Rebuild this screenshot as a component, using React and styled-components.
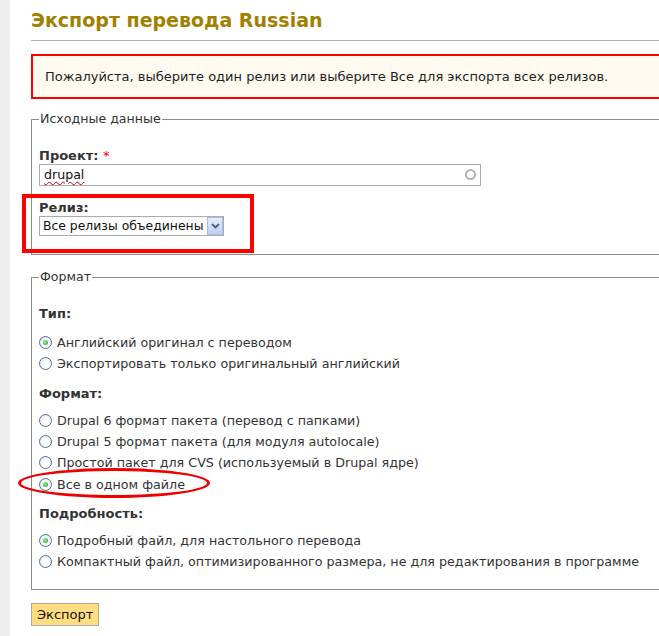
import React from "react";
import styled, { createGlobalStyle } from "styled-components";

const Global = createGlobalStyle`
  html, body { margin: 0; padding: 0; background: #fff; overflow: hidden; }
  body { font-family: "DejaVu Sans", Verdana, sans-serif; font-size: 12.7px; color: #333; }
  * { box-sizing: border-box; }
`;

const Page = styled.div`
  position: relative;
  display: flex;
  width: 659px;
  height: 636px;
  overflow: hidden;
`;

const Strip = styled.div`
  flex: 0 0 10px;
  background: #eeeeee;
`;

const Main = styled.div`
  flex: 0 0 720px;
  margin-left: 21px;
  padding-top: 8px;
`;

const Title = styled.h1`
  margin: 0;
  padding-bottom: 8px;
  font-size: 19px;
  line-height: 24px;
  font-weight: bold;
  color: #a08000;
  border-bottom: 1px solid #b4b4b4;
`;

const Message = styled.div`
  margin-top: 13px;
  height: 45px;
  border: 2px solid #ff0000;
  background: #fffaf0;
  padding: 0 12px;
  font-size: 13px;
  line-height: 41px;
  color: #1e1e1e;
`;

const Fieldset = styled.fieldset`
  margin: ${(p) => p.$mt}px 0 0;
  padding: 22px 7px ${(p) => p.$pb}px;
  border: 1px solid #8c8c8c;
  border-right: none;
`;

const Legend = styled.legend`
  padding: 0 1px;
  font-size: 12.6px;
  line-height: 14px;
  color: #333;
`;

const Label = styled.div`
  font-weight: bold;
  font-size: 13px;
  line-height: 16px;
  color: #333;
  margin-bottom: ${(p) => p.$mb || 0}px;
`;

const Required = styled.span`
  color: #e00;
  font-weight: normal;
`;

const TextBox = styled.div`
  position: relative;
  width: 442px;
  height: 22px;
  border: 1px solid #a5acb2;
  padding-left: 4px;
  font-size: 12.6px;
  line-height: 20px;
  color: #111;
`;

const Misspelled = styled.span`
  text-decoration: underline wavy #e00000;
  text-decoration-thickness: 1px;
  text-underline-offset: 2px;
`;

const Throbber = styled.span`
  position: absolute;
  right: 4px;
  top: 4px;
  width: 11px;
  height: 11px;
  border: 2px solid #b3b3b3;
  border-radius: 50%;
`;

const Gap = styled.div`
  height: ${(p) => p.$h}px;
`;

const Select = styled.div`
  display: flex;
  width: 185px;
  height: 20px;
  border: 1px solid #a5acb2;
  color: #111;
`;

const SelectText = styled.div`
  flex: 1;
  overflow: hidden;
  white-space: nowrap;
  padding-left: 3px;
  font-size: 12.4px;
  line-height: 18px;
`;

const SelectArrow = styled.div`
  flex: 0 0 16px;
  display: flex;
  align-items: center;
  justify-content: center;
  border: 1px solid #a9bde8;
  background: linear-gradient(#e6edfc, #bfcff3);
`;

const Group = styled.div`
  margin-bottom: ${(p) => (p.$last ? 0 : 11)}px;
`;

const RadioRow = styled.div`
  display: flex;
  align-items: center;
  height: 21.3px;
  gap: 5px;
  color: #333;
  white-space: nowrap;
`;

const RadioCircle = styled.span`
  position: relative;
  flex: 0 0 13px;
  width: 13px;
  height: 13px;
  border-radius: 50%;
  border: 1px solid #4f6f9a;
  background: radial-gradient(circle at 60% 65%, #ffffff 30%, #dce2ec 100%);
  &::after {
    content: "";
    display: ${(p) => (p.$checked ? "block" : "none")};
    position: absolute;
    left: 3px;
    top: 3px;
    width: 5px;
    height: 5px;
    border-radius: 50%;
    background: radial-gradient(circle at 40% 40%, #8ef08e, #17a11c);
  }
`;

const Button = styled.button`
  margin-top: 13px;
  height: 23px;
  padding: 0 5px;
  font-family: "DejaVu Sans", Verdana, sans-serif;
  font-size: 13px;
  color: #111;
  background: #ffdd80;
  border: 1px solid #aaa9a3;
  border-radius: 0;
`;

const AnnotRect = styled.div`
  position: absolute;
  left: 22px;
  top: 194px;
  width: 232px;
  height: 59px;
  border: 4px solid #ff0000;
  pointer-events: none;
`;

const AnnotEllipse = styled.div`
  position: absolute;
  left: 18px;
  top: 468px;
  width: 192px;
  height: 30px;
  border: 3px solid #ee0000;
  border-radius: 50%;
  pointer-events: none;
`;

function Radio({ checked, children }) {
  return (
    <RadioRow>
      <RadioCircle $checked={checked} />
      <span>{children}</span>
    </RadioRow>
  );
}

export default function App() {
  return (
    <>
      <Global />
      <Page>
        <Strip />
        <Main>
          <Title>Экспорт перевода Russian</Title>
          <Message>
            Пожалуйста, выберите один релиз или выберите Все для экспорта всех релизов.
          </Message>

          <Fieldset $mt={13} $pb={18}>
            <Legend>Исходные данные</Legend>
            <Label>
              Проект: <Required>*</Required>
            </Label>
            <TextBox>
              <Misspelled>drupal</Misspelled>
              <Throbber />
            </TextBox>
            <Gap $h={14} />
            <Label>Релиз:</Label>
            <Select>
              <SelectText>Все релизы объединены</SelectText>
              <SelectArrow>
                <svg width="9" height="6" viewBox="0 0 9 6">
                  <path d="M1 1 L4.5 4.5 L8 1" fill="none" stroke="#4d6185" strokeWidth="1.8" />
                </svg>
              </SelectArrow>
            </Select>
          </Fieldset>

          <Fieldset $mt={15} $pb={17}>
            <Legend>Формат</Legend>
            <Group>
              <Label $mb={10}>Тип:</Label>
              <Radio checked>Английский оригинал с переводом</Radio>
              <Radio>Экспортировать только оригинальный английский</Radio>
            </Group>
            <Group>
              <Label $mb={8}>Формат:</Label>
              <Radio>Drupal 6 формат пакета (перевод с папками)</Radio>
              <Radio>Drupal 5 формат пакета (для модуля autolocale)</Radio>
              <Radio>Простой пакет для CVS (используемый в Drupal ядре)</Radio>
              <Radio checked>Все в одном файле</Radio>
            </Group>
            <Group $last>
              <Label $mb={8}>Подробность:</Label>
              <Radio checked>Подробный файл, для настольного перевода</Radio>
              <Radio>Компактный файл, оптимизированного размера, не для редактирования в программе</Radio>
            </Group>
          </Fieldset>

          <Button type="button">Экспорт</Button>
        </Main>
        <AnnotRect />
        <AnnotEllipse />
      </Page>
    </>
  );
}
